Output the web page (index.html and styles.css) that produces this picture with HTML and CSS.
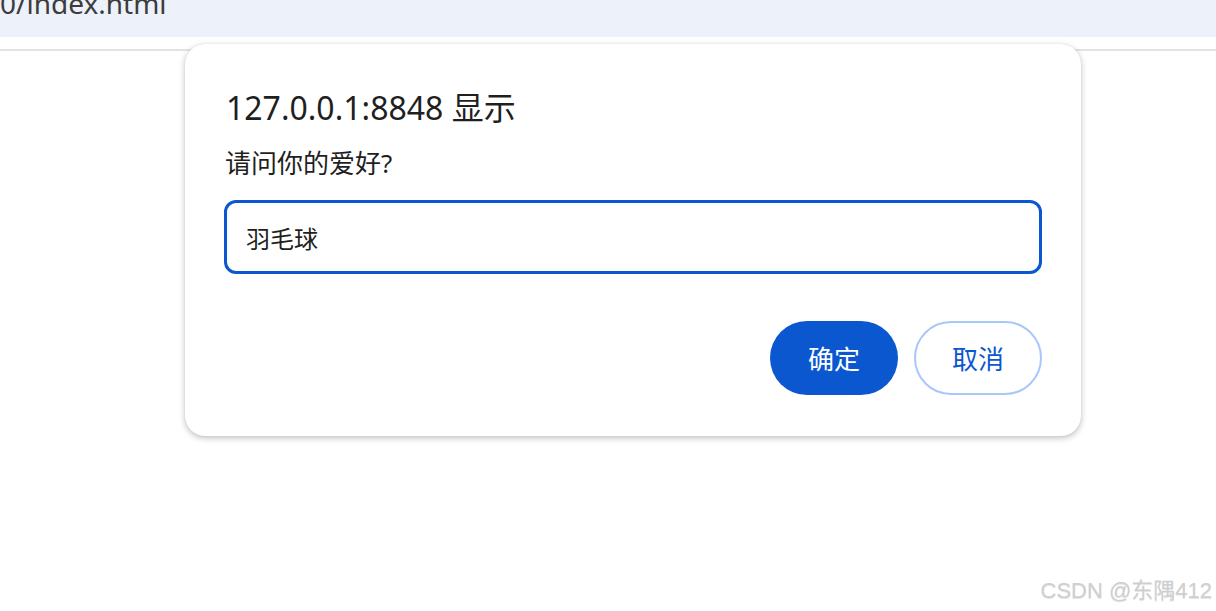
FILE: index.html
```html
<!DOCTYPE html>
<html lang="zh-CN">
<head>
    <meta charset="UTF-8">
    <meta name="viewport" content="width=device-width, initial-scale=1.0">
    <title>prompt</title>
    <link rel="stylesheet" href="styles.css">
</head>
<body>
<div class="address-bar">
    <span class="url">0/index.html</span>
</div>
<div class="toolbar-line"></div>

<div class="dialog">
    <h1 class="dialog-title">127.0.0.1:8848 显示</h1>
    <p class="dialog-message">请问你的爱好?</p>
    <input type="text" class="dialog-input" value="羽毛球">
    <div class="dialog-buttons">
        <button class="btn btn-ok">确定</button>
        <button class="btn btn-cancel">取消</button>
    </div>
</div>

<div class="watermark">CSDN @东隅412</div>
</body>
</html>
```

FILE: styles.css
```css
body {
    margin: 0;
    background-color: #fff;
    font-family: "Noto Sans", "Noto Sans CJK SC", sans-serif;
    color: #1f1f1f;
    height: 611px;
    overflow: hidden;
    position: relative;
}
.address-bar {
    height: 37px;
    background-color: #edf1fa;
    overflow: hidden;
}
.url {
    display: block;
    margin-top: -15px;
    font-size: 28px;
    line-height: 36px;
    color: #3c3c3c;
}
.toolbar-line {
    margin-top: 12px;
    height: 2px;
    background-color: #e3e3e3;
}
.dialog {
    position: absolute;
    left: 185px;
    top: 44px;
    width: 896px;
    height: 392px;
    box-sizing: border-box;
    padding: 0 39px;
    background-color: #fff;
    border-radius: 20px;
    box-shadow: 0 2px 6px rgba(0, 0, 0, 0.25), 0 0 1px rgba(0, 0, 0, 0.15);
}
.dialog-title {
    margin: 44px 0 0 2px;
    font-size: 32px;
    font-weight: normal;
    line-height: 40px;
}
.dialog-message {
    margin: 18px 0 0 1px;
    font-size: 26px;
    line-height: 34px;
}
.dialog-input {
    display: block;
    box-sizing: border-box;
    width: 100%;
    height: 74px;
    margin-top: 20px;
    padding: 0 19px;
    font-family: inherit;
    font-size: 24px;
    color: #1f1f1f;
    border: 3px solid #0b57d0;
    border-radius: 12px;
    outline: none;
}
.dialog-buttons {
    display: flex;
    justify-content: flex-end;
    gap: 16px;
    margin-top: 47px;
}
.btn {
    width: 128px;
    height: 74px;
    border-radius: 37px;
    font-family: inherit;
    font-size: 26px;
    cursor: pointer;
}
.btn-ok {
    background-color: #0b57d0;
    color: #fff;
    border: none;
}
.btn-cancel {
    background-color: #fff;
    color: #0b57d0;
    border: 2px solid #a8c7fa;
}
.watermark {
    position: absolute;
    right: 4px;
    bottom: 7px;
    font-family: "Liberation Sans", "Noto Sans CJK SC", sans-serif;
    font-size: 22px;
    color: #cfcfcf;
    text-shadow: 0 1px 0 #e6e6e6;
}
```
